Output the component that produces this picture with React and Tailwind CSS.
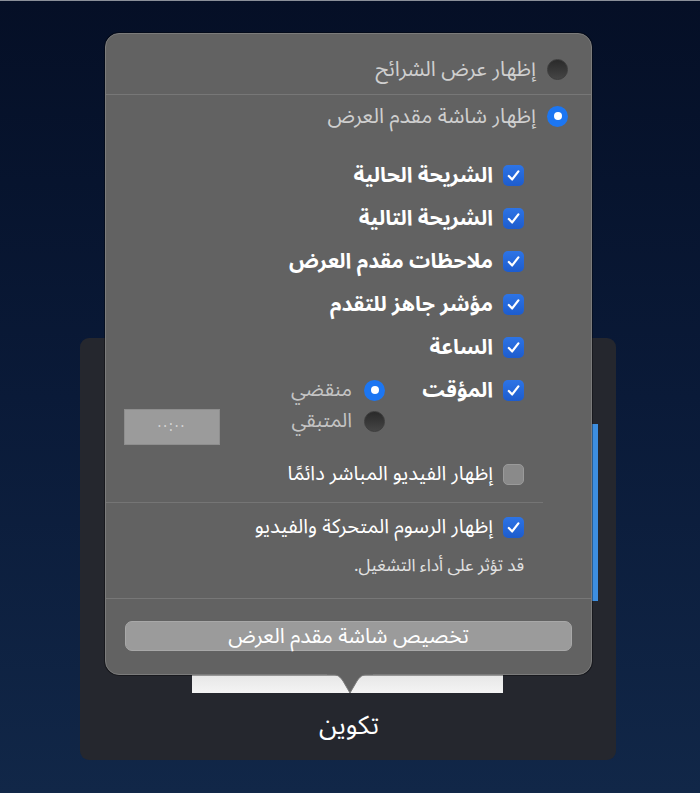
import React from "react";

const font = { fontFamily: '"Noto Sans Arabic", "Noto Naskh Arabic", "DejaVu Sans", sans-serif' };

function Check({ checked = true }) {
  if (!checked) {
    return (
      <span className="flex h-[21px] w-[21px] shrink-0 rounded-[5px] border border-[#9a9a9a] bg-[#8a8a8a]" />
    );
  }
  return (
    <span className="flex h-[21px] w-[21px] shrink-0 items-center justify-center rounded-[5px] bg-gradient-to-b from-[#2d74e6] to-[#1d5ccd]">
      <svg width="15" height="15" viewBox="0 0 16 16" fill="none">
        <path d="M3 8.6 L6.6 12.2 L13.2 3.6" stroke="white" strokeWidth="2.4" strokeLinecap="round" strokeLinejoin="round" />
      </svg>
    </span>
  );
}

function Radio({ checked }) {
  if (checked) {
    return (
      <span className="flex h-[21px] w-[21px] shrink-0 items-center justify-center rounded-full bg-[#1c76f2]">
        <span className="h-[8px] w-[8px] rounded-full bg-white" />
      </span>
    );
  }
  return (
    <span className="flex h-[21px] w-[21px] shrink-0 rounded-full bg-gradient-to-b from-[#2a2a2a] to-[#454545] border border-[#3c3c3c]" />
  );
}

export default function App() {
  return (
    <div
      className="relative h-[793px] w-[700px] overflow-hidden border-t border-[#8a8f99] bg-gradient-to-b from-[#050f26] via-[#0a1a38] to-[#112748]"
      style={font}
    >
      {/* background card */}
      <div className="ml-[80px] mt-[337px] flex h-[422px] w-[536px] flex-col rounded-[9px] bg-[#25272e]">
        <div className="flex justify-end">
          <div className="mr-[18px] mt-[86px] h-[177px] w-[6px] bg-[#3d8ee0]" />
        </div>
        <div className="ml-[112px] mt-[73px] h-[19px] w-[311px] bg-gradient-to-b from-[#e6e6e6] to-[#f4f4f4]" />
        <div className="mt-[17px] flex justify-center pl-[2px] text-[26px] leading-[32px] text-white" dir="rtl">
          تكوين
        </div>
      </div>

      {/* popover */}
      <div className="absolute left-[105px] top-[32px] w-[487px]">
        <div
          dir="rtl"
          className="relative z-10 flex h-[642px] flex-col rounded-[14px] border border-[#7b7b7b] bg-[#626262] shadow-[0_0_0_1px_rgba(0,0,0,0.35)]"
        >
          {/* section 1 */}
          <div className="flex h-[60px] items-start pr-[23px] pt-[23px]">
            <div className="flex h-[24px] items-center gap-[11px]">
              <Radio checked={false} />
              <span className="text-[21px] leading-[24px] text-[#cfcfcf]">إظهار عرض الشرائح</span>
            </div>
          </div>
          <div className="h-px bg-[#777777]" />

          {/* section 2 */}
          <div className="pr-[23px] pt-[9px]">
            <div className="flex h-[24px] items-center gap-[11px]">
              <Radio checked />
              <span className="text-[21px] leading-[24px] text-[#cfcfcf]">إظهار شاشة مقدم العرض</span>
            </div>
          </div>

          {/* checklist */}
          <div className="mt-[35px] flex flex-col gap-[19px] pl-[18px] pr-[67px]">
            {["الشريحة الحالية", "الشريحة التالية", "ملاحظات مقدم العرض", "مؤشر جاهز للتقدم", "الساعة"].map((t) => (
              <div key={t} className="flex h-[24px] items-center gap-[10px]">
                <Check />
                <span className="text-[21px] font-bold leading-[24px] text-white">{t}</span>
              </div>
            ))}
            <div className="flex items-start">
              <div className="flex h-[24px] w-[139px] items-center gap-[10px]">
                <Check />
                <span className="text-[21px] font-bold leading-[24px] text-white">المؤقت</span>
              </div>
              <div className="flex flex-col gap-[7px]">
                <div className="flex h-[24px] items-center gap-[12px]">
                  <Radio checked />
                  <span className="text-[20px] leading-[24px] text-[#c4c4c4]">منقضي</span>
                </div>
                <div className="flex h-[24px] items-center gap-[12px]">
                  <Radio checked={false} />
                  <span className="text-[20px] leading-[24px] text-[#c4c4c4]">المتبقي</span>
                </div>
              </div>
              <div className="mr-auto mt-[31px] flex h-[36px] w-[96px] items-center justify-center border border-[#8e8e8e] bg-[#9b9b9b] text-[14px] leading-[16px] tracking-[2px] text-[#d6d6d6]" dir="ltr">
                ··:··
              </div>
            </div>
          </div>

          <div className="mt-[17px] pr-[67px]">
            <div className="flex h-[24px] items-center gap-[10px]">
              <Check checked={false} />
              <span className="text-[20px] leading-[24px] text-white">إظهار الفيديو المباشر دائمًا</span>
            </div>
          </div>

          <div className="mr-[48px] mt-[16px] h-px bg-[#757575]" />

          <div className="mt-[12px] pr-[67px]">
            <div className="flex h-[24px] items-center gap-[10px]">
              <Check />
              <span className="text-[20px] leading-[24px] text-white">إظهار الرسوم المتحركة والفيديو</span>
            </div>
            <div className="mt-[17px] text-[17px] leading-[20px] text-[#e2e2e2]">قد تؤثر على أداء التشغيل.</div>
          </div>

          <div className="mt-[22px] h-px bg-[#777777]" />

          <div className="px-[19px] pt-[22px]">
            <div className="flex h-[30px] items-center justify-center rounded-[7px] border border-[#a8a8a8] bg-[#9b9b9b] text-[21px] leading-[24px] text-white">
              تخصيص شاشة مقدم العرض
            </div>
          </div>
        </div>
        {/* arrow */}
        <div className="relative z-20 -mt-[2px] flex justify-center">
          <svg width="46" height="22" viewBox="0 0 46 22" className="ml-[3px]">
            <path d="M0 1 C9 1 12 2 16 8 L23 20 L30 8 C34 2 37 1 46 1 Z" fill="#626262" />
            <path d="M0 1 C9 1 12 2 16 8 L23 20 L30 8 C34 2 37 1 46 1" fill="none" stroke="#7b7b7b" strokeWidth="1" />
            <rect x="0" y="0" width="46" height="1.5" fill="#626262" />
          </svg>
        </div>
      </div>
    </div>
  );
}
